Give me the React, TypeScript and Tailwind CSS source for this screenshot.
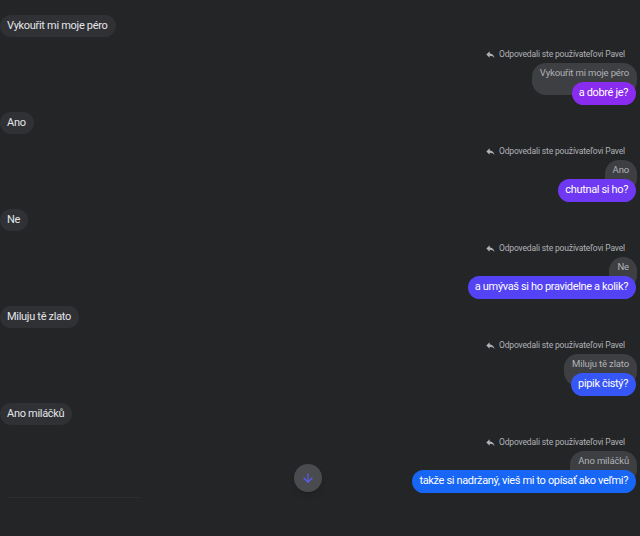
import { ArrowDown } from 'lucide-react';

interface Thread {
  incoming: string;
  reply: string;
  color: string;
}

const threads: Thread[] = [
  { incoming: 'Vykouřit mi moje péro', reply: 'a dobré je?', color: 'bg-[#8a2cf0]' },
  { incoming: 'Ano', reply: 'chutnal si ho?', color: 'bg-[#6f38f2]' },
  { incoming: 'Ne', reply: 'a umývaš si ho pravidelne a kolik?', color: 'bg-[#5443f4]' },
  { incoming: 'Miluju tě zlato', reply: 'pipik čistý?', color: 'bg-[#3656f6]' },
  { incoming: 'Ano miláčků', reply: 'takže si nadržaný, vieš mi to opísať ako veľmi?', color: 'bg-[#1766f5]' },
];

function ReplyIcon() {
  return (
    <svg width="11" height="11" viewBox="0 0 24 24" fill="currentColor">
      <path d="M10 9V5l-7 7 7 7v-4.1c5 0 8.5 1.6 11 5.1-1-5-4-10-11-11z" />
    </svg>
  );
}

function ThreadBlock({ thread }: { thread: Thread }) {
  return (
    <div className="flex flex-col">
      <div className="flex">
        <span className="flex h-[22px] items-center rounded-full bg-[#303134] pl-[7px] pr-[8px] text-[11px] tracking-[-0.3px] text-[#e4e6eb]">
          {thread.incoming}
        </span>
      </div>
      <div className="mt-[11px] flex flex-col items-end pr-[4px]">
        <div className="flex h-[12px] items-center gap-[3px] pr-[11px] text-[8.5px] tracking-[-0.15px] text-[#b0b3b8]">
          <ReplyIcon />
          <span>Odpovedali ste používateľovi Pavel</span>
        </div>
        <div className="mt-[3px] -mb-[13px] -mr-[1px] rounded-[14px] bg-[#3e3f42] px-[8px] pb-[15px] pt-[3px] text-[9.5px] leading-[14px] tracking-[-0.15px] text-[#b0b3b8]">
          {thread.incoming}
        </div>
        <span
          className={`relative flex h-[23px] items-center rounded-full pl-[7px] pr-[8px] text-[11px] tracking-[-0.35px] text-white ${thread.color}`}
        >
          {thread.reply}
        </span>
      </div>
    </div>
  );
}

export default function App() {
  return (
    <div
      className="relative h-[536px] w-[640px] overflow-hidden bg-[#242527] pt-[15px]"
      style={{ fontFamily: 'Roboto, "Liberation Sans", Arial, sans-serif' }}
    >
      <div className="flex flex-col gap-[7px]">
        {threads.map((t) => (
          <ThreadBlock key={t.incoming} thread={t} />
        ))}
      </div>
      <div className="ml-[8px] mt-[4px] w-[132px] border-t border-[#2c2d30]" />

      <button className="absolute left-[294px] top-[464px] flex h-[28px] w-[28px] items-center justify-center rounded-full bg-[#4a4b4e] shadow-md">
        <ArrowDown size={14} strokeWidth={2} className="text-[#5b5ff8]" />
      </button>
    </div>
  );
}
